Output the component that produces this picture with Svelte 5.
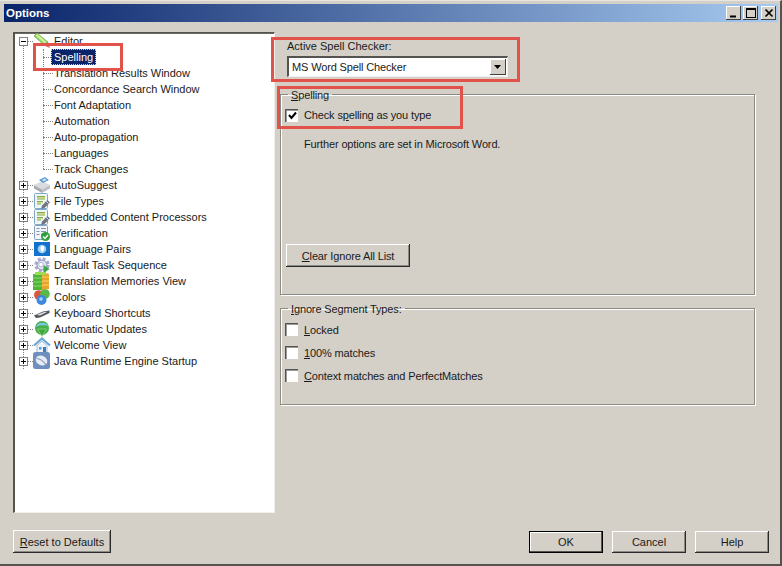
<script>
  const children = ['Spelling','Translation Results Window','Concordance Search Window','Font Adaptation','Automation','Auto-propagation','Languages','Track Changes'];
  const roots = [
    ['AutoSuggest','suggest'],['File Types','doc'],['Embedded Content Processors','doc'],['Verification','verify'],
    ['Language Pairs','pairs'],['Default Task Sequence','gear'],['Translation Memories View','tm'],['Colors','colors'],
    ['Keyboard Shortcuts','key'],['Automatic Updates','update'],['Welcome View','home'],['Java Runtime Engine Startup','java']
  ];
</script>

{#snippet expander(open)}
  <svg class="exp" width="9" height="9" viewBox="0 0 9 9">
    <rect x=".5" y=".5" width="8" height="8" fill="#fff" stroke="#808080"/>
    <path d="M2 4.500h5" stroke="#000"/>
    {#if !open}<path d="M4.500 2v5" stroke="#000"/>{/if}
  </svg>
{/snippet}

{#snippet icon(kind)}
  <svg class="ico" width="16" height="16" viewBox="0 0 16 16">
    {#if kind === 'editor'}
      <path d="M0 3 3 0l11 9-3 4z" fill="#8fcf5a" stroke="#6aa040" stroke-width=".6"/>
      <path d="M1.500 2.500l2-1.500 9 8-2 1.500z" fill="#c9eea0"/>
      <path d="M11 13l3-4 2 6z" fill="#e4606a"/>
    {:else if kind === 'suggest'}
      <path d="M0 8 8 4l8 4-8 4.500z" fill="#d8dce0"/>
      <path d="M0 8v3.500l8 4.500v-3.500z" fill="#a8acb0"/>
      <path d="M8 12.500V16l8-4.500V8z" fill="#bcc0c4"/>
      <path d="M5 3l6-3 4 3-6 3z" fill="#5f9ad0"/>
      <path d="M8 3l3-1.500 1.500 1.200-3 1.500z" fill="#dcecf8"/>
    {:else if kind === 'doc'}
      <rect x=".5" y=".5" width="13" height="15" rx="1" fill="#eef6fb" stroke="#7fa8c8"/>
      <path d="M3 3.500h8M3 6h8M3 8.500h6M3 11h4" stroke="#7cb23c"/>
      <path d="M3 4.700h8M3 9.700h6" stroke="#c8b040" stroke-width=".7"/>
      <path d="M7 16l1-3.500 5.500-5.500 2.500 2.500-5.500 5.500z" fill="#6f7882"/>
      <path d="M12.500 8.500l2 2" stroke="#dfe3e8"/>
    {:else if kind === 'verify'}
      <rect x=".5" y=".5" width="13" height="14" rx="1" fill="#f2f6fa" stroke="#86a0c0"/>
      <path d="M2.500 3.500h3M7 3.500h5M2.500 6.500h3M7 6.500h5M2.500 9.500h3M7 9.500h2" stroke="#7f94b0"/>
      <circle cx="11.500" cy="11.500" r="4.500" fill="#2f9e3c"/>
      <path d="M9 11.500l2 2 3-3.500" fill="none" stroke="#fff" stroke-width="1.300"/>
    {:else if kind === 'pairs'}
      <rect x="0" y="1" width="16" height="14" fill="#1272cc"/>
      <circle cx="8" cy="8" r="4.300" fill="#9fd0f2"/>
      <path d="M7 5h3v3.500L8 11.500 6.500 8z" fill="#fff"/>
    {:else if kind === 'gear'}
      <circle cx="8" cy="8" r="6" fill="none" stroke="#a8acd0" stroke-width="3.400" stroke-dasharray="2.800 1.900"/>
      <circle cx="8" cy="8" r="5" fill="#dde0ee" stroke="#9296bc"/>
      <circle cx="7" cy="7.500" r="2.200" fill="#fff" stroke="#a8acd0" stroke-width=".7"/>
      <path d="M9.500 8l6 4-6 4z" fill="#3aa848"/>
    {:else if kind === 'tm'}
      <rect x="-1" y="1" width="9" height="16" fill="#4fb43a"/>
      <path d="M-1 5h9M-1 9h9M-1 13h9" stroke="#8fdc60"/>
      <path d="M8 -1l7 2v15l-7 1z" fill="#e8a428"/>
      <path d="M8 4h7M8 8h7M8 12h7" stroke="#f8d070"/>
      <rect x="1" y="-1" width="11" height="3" fill="#9bdc55"/>
    {:else if kind === 'colors'}
      <circle cx="4.800" cy="6" r="4.800" fill="#d85840"/>
      <circle cx="11" cy="5" r="4.800" fill="#55b848"/>
      <circle cx="7.500" cy="11" r="5" fill="#3c88dc"/>
      <circle cx="7" cy="10" r="1.800" fill="#a8d4f8"/>
    {:else if kind === 'key'}
      <path d="M0 10.500 9 6.500l6.500-1v2.500L6 12.500l-4 .5z" fill="#50535a"/>
      <path d="M2.500 10 10 7l3.500-.2-7.500 3.700z" fill="#dfe1e5"/>
    {:else if kind === 'update'}
      <circle cx="8" cy="7" r="7" fill="#46b048"/>
      <path d="M1.500 6C3.500 1 11 0 14.500 5c-3-1-10-1-13 1z" fill="#7cc8ec"/>
      <path d="M3.500 8h9L8 15.500z" fill="#3ea83f" stroke="#a8e090" stroke-width=".6"/>
    {:else if kind === 'home'}
      <path d="M0 8.500 8 1.500l8 7" fill="none" stroke="#6ca8d4" stroke-width="2.200"/>
      <path d="M3 8.500 8 4l5 4.500V15.500H3z" fill="#eef4fa" stroke="#7aa0c4" stroke-width=".7"/>
      <rect x="9" y="10" width="3" height="5.500" fill="#3c7cc0"/>
      <rect x="5" y="10" width="2.500" height="2.500" fill="#5c9cd8"/>
    {:else if kind === 'java'}
      <rect x="-1" y="-1" width="17" height="17" rx="2.500" fill="#6f8fc0"/>
      <ellipse cx="7.500" cy="7.500" rx="6" ry="4.800" fill="#e8ecf4" transform="rotate(25 7.500 7.500)"/>
      <path d="M2.500 5.500c3 0 6.500 2 9.500 6.500" fill="none" stroke="#8098c0" stroke-width="1.200"/>
    {/if}
  </svg>
{/snippet}

<div class="window">
  <header class="titlebar">
    <span class="title">Options</span>
    <div class="caption">
      <button class="cap" aria-label="Minimize"><svg width="14" height="14" viewBox="0 0 14 14"><path d="M3 10.500h6" stroke="#000" stroke-width="2"/></svg></button>
      <button class="cap" aria-label="Maximize"><svg width="14" height="14" viewBox="0 0 14 14"><rect x="2.500" y="2.500" width="9" height="9" fill="none" stroke="#000"/><path d="M2 3h10" stroke="#000" stroke-width="2"/></svg></button>
      <button class="cap close" aria-label="Close"><svg width="14" height="14" viewBox="0 0 14 14"><path d="M3.500 3.500l7 7M10.500 3.500l-7 7" stroke="#000" stroke-width="1.700"/></svg></button>
    </div>
  </header>

  <main class="content">
    <nav class="tree">
      <span class="vline root-line"></span>
      <span class="vline child-line"></span>
      <div class="row">
        {@render expander(true)}<span class="dash"></span>{@render icon('editor')}<span class="lbl">Editor</span>
      </div>
      {#each children as c, i}
        <div class="row child">
          <span class="dash child-dash"></span><span class="lbl" class:sel={i === 0}>{c}</span>
        </div>
      {/each}
      {#each roots as [name, kind]}
        <div class="row">
          {@render expander(false)}<span class="dash"></span>{@render icon(kind)}<span class="lbl">{name}</span>
        </div>
      {/each}
    </nav>

    <section class="panel">
      <div class="checker">
        <span class="field-label">Active Spell Checker:</span>
        <div class="combo">
          <span class="combo-text">MS Word Spell Checker</span>
          <span class="combo-btn"><svg width="8" height="4" viewBox="0 0 8 4"><path d="M0 0h7L3.500 4z" fill="#000"/></svg></span>
        </div>
      </div>

      <fieldset class="group spelling">
        <legend><u>S</u>pelling</legend>
        <label class="check first"><span class="box"><svg width="9" height="9" viewBox="0 0 9 9"><path d="M1 4l2.500 3L8 1.500" fill="none" stroke="#000" stroke-width="2"/></svg></span><span>Check s<u>p</u>elling as you type</span></label>
        <p class="note">Further options are set in Microsoft Word.</p>
        <button class="btn clear"><u>C</u>lear Ignore All List</button>
      </fieldset>

      <fieldset class="group ignore">
        <legend><u>I</u>gnore Segment Types:</legend>
        <label class="check top"><span class="box"></span><span><u>L</u>ocked</span></label>
        <label class="check"><span class="box"></span><span><u>1</u>00% matches</span></label>
        <label class="check"><span class="box"></span><span><u>C</u>ontext matches and PerfectMatches</span></label>
      </fieldset>
    </section>
  </main>

  <footer class="footer">
    <button class="btn reset"><u>R</u>eset to Defaults</button>
    <div class="actions">
      <button class="btn act ok">OK</button>
      <button class="btn act">Cancel</button>
      <button class="btn act">Help</button>
    </div>
  </footer>

  <span class="mark m1"></span>
  <span class="mark m2"></span>
  <span class="mark m3"></span>
</div>

<style>
  :global(body) { margin: 0; background: #d4d0c8; }
  .window {
    position: relative; box-sizing: border-box; width: 782px; height: 566px; overflow: hidden;
    background: #d4d0c8; color: #1a1a1a;
    font: 11px/16px "Liberation Sans", Arial, sans-serif;
    padding: 3px 2px 3px 4px;
    border-top: 1px solid #e8e6e0;
    border-right: 2px solid #55534f;
    border-bottom: 2px solid #55534f;
    display: flex; flex-direction: column;
  }
  .titlebar {
    flex: none; height: 18px; display: flex; align-items: center; justify-content: space-between;
    background: linear-gradient(90deg, #0a246a, #a6caf0);
    padding: 0 2px;
  }
  .title { color: #fff; font-weight: bold; font-size: 11.500px; }
  .caption { display: flex; gap: 2px; }
  .close { margin-left: 1px; }
  .cap {
    box-sizing: border-box; width: 15px; height: 14px; padding: 0; background: #d4d0c8; display: flex; align-items: center; justify-content: center;
    border: 0; box-shadow: inset -1px -1px 0 #404040, inset 1px 1px 0 #fff;
  }
  .cap svg { display: block; flex: none; }
  .content { flex: none; display: flex; padding: 10px 0 0 9px; }
  .tree {
    position: relative; flex: none; box-sizing: border-box; width: 262px; height: 481px;
    background: #fff; padding: 0 0 0 4px;
    border-top: 1px solid #55534f; border-left: 2px solid #55534f;
    border-right: 1px solid #f2f0ec; border-bottom: 1px solid #f2f0ec;
    box-shadow: inset 0 1px 0 #6a6864;
  }
  .row { position: relative; display: flex; align-items: center; height: 16px; white-space: nowrap; }
  .exp { flex: none; position: relative; z-index: 1; }
  .dash { flex: none; width: 5px; border-top: 1px dotted #808080; margin-right: 1px; }
  .ico { flex: none; margin-right: 3px; overflow: visible; }
  .child { padding-left: 24px; }
  .child-dash { width: 10px; margin-right: 0; }
  .lbl { padding: 0 1px; line-height: 16px; }
  .sel { background: #0a246a; color: #fff; outline: 1px dotted #c8c8c8; outline-offset: -1px; padding: 0 3px; margin-left: -2px; }
  .vline { position: absolute; width: 0; border-left: 1px dotted #808080; }
  .root-line { left: 8px; top: 12px; height: 324px; }
  .child-line { left: 28px; top: 16px; height: 120px; }
  .panel { flex: none; width: 475px; margin-left: 5px; letter-spacing: -0.14px; }
  .checker { padding: 6px 0 0 7px; height: 54px; box-sizing: border-box; }
  .field-label { display: block; line-height: 14px; margin-top: 1px; letter-spacing: 0; }
  .combo {
    box-sizing: border-box; width: 221px; height: 21px; margin-top: 3px; display: flex; align-items: center; justify-content: space-between;
    background: #fff; border-top: 2px solid #55534f; border-left: 2px solid #55534f;
    border-right: 1px solid #f2f0ec; border-bottom: 1px solid #f2f0ec;
    padding: 0 1px 0 3px;
  }
  .combo-btn {
    box-sizing: border-box; width: 16px; height: 16px; display: flex; align-items: center; justify-content: center; background: #d4d0c8;
    box-shadow: inset -1px -1px 0 #404040, inset 1px 1px 0 #fff;
  }
  .group {
    margin: 0; padding: 0 0 0 4px; box-sizing: border-box; width: 475px; min-width: 0;
    border: 1px solid #8c8a84; box-shadow: inset 1px 1px 0 #fff, 1px 1px 0 #fff;
  }
  .group legend { margin-left: 3px; padding: 2px 3px 0; line-height: 14px; }
  .spelling { height: 209px; }
  .ignore { height: 105px; margin-top: 5px; }
  .check { display: flex; align-items: center; height: 23px; gap: 6px; }
  .first { height: 16px; margin-top: 5px; }
  .top { margin-top: 2px; }
  .box {
    box-sizing: border-box; flex: none; width: 13px; height: 13px; background: #fff; display: flex; align-items: center; justify-content: center;
    border-top: 1px solid #55534f; border-left: 1px solid #55534f; box-shadow: inset 1px 1px 0 #999;
  }
  .box svg { display: block; }
  .note { margin: 13px 0 0 19px; line-height: 16px; }
  .btn {
    box-sizing: border-box; height: 23px; padding: 0; background: #d4d0c8; font: inherit; color: #1a1a1a; border: 0;
    box-shadow: inset -1px -1px 0 #2a2a2a, inset 1px 1px 0 #fff, inset -2px -2px 0 #8c8a84;
  }
  .clear { width: 124px; margin: 92px 0 0 1px; display: block; letter-spacing: -0.14px; }
  .footer { flex: 1; display: flex; align-items: flex-start; justify-content: space-between; padding: 17px 9px 0 9px; }
  .reset { width: 98px; }
  .actions { display: flex; gap: 9px; margin-top: 1px; }
  .act { width: 74px; height: 22px; }
  .ok { outline: 1px solid #000; outline-offset: -1px; box-shadow: inset -2px -2px 0 #55534f, inset 2px 2px 0 #fff; }
  .mark { position: absolute; box-sizing: border-box; border: 3px solid #e0524a; pointer-events: none; }
  .m1 { left: 33px; top: 42px; width: 90px; height: 28px; }
  .m2 { left: 271px; top: 36px; width: 249px; height: 45px; }
  .m3 { left: 277px; top: 85px; width: 186px; height: 43px; }
</style>
